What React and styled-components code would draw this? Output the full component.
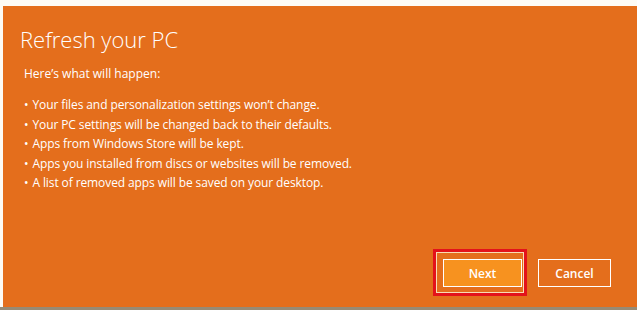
import React from "react";
import styled, { createGlobalStyle } from "styled-components";

const GlobalStyle = createGlobalStyle`
  html, body {
    margin: 0;
    padding: 0;
    background: #ffffff;
  }
  body {
    font-family: "Open Sans", "Noto Sans", sans-serif;
  }
`;

// Outer screen: thin white band on top, tan edge at the bottom
const Screen = styled.div`
  width: 637px;
  height: 310px;
  display: flex;
  flex-direction: column;
  background: #fdfbf5;
  padding: 6px 0 0 3px;
  box-sizing: border-box;
  overflow: hidden;
`;

const Panel = styled.div`
  flex: 1;
  display: flex;
  flex-direction: column;
  background: #e46e1c;
  color: #ffffff;
  padding: 0 0 0 17px;
`;

const BottomEdge = styled.div`
  height: 3px;
  margin-left: -3px;
  background: #978a74;
`;

const Title = styled.h1`
  margin: 18px 0 0 0;
  font-size: 22px;
  font-weight: 300;
  line-height: 30px;
`;

const Intro = styled.p`
  margin: 11px 0 0 4px;
  font-size: 12px;
  line-height: 18px;
`;

const List = styled.ul`
  list-style: none;
  margin: 12px 0 0 4px;
  padding: 0;
`;

const Item = styled.li`
  font-size: 12px;
  line-height: 19.5px;
  letter-spacing: -0.1px;

  &::before {
    content: "•";
    margin-right: 4px;
  }
`;

const Footer = styled.div`
  margin-top: auto;
  margin-bottom: 11px;
  display: flex;
  justify-content: flex-end;
  align-items: center;
  padding-right: 26px;
`;

// Red annotation frame around the Next button
const Highlight = styled.div`
  border: 3px solid #e3121b;
  margin-right: 11px;
`;

const FocusRing = styled.div`
  border: 1px solid #f8dcb4;
  padding: 6px 1px 5px 6px;
`;

const Button = styled.button`
  width: ${(p) => (p.$wide ? 79 : 73)}px;
  height: 28px;
  box-sizing: border-box;
  border: 1px solid #ffffff;
  background: ${(p) => (p.$primary ? "#f7921f" : "transparent")};
  color: #ffffff;
  font-family: "Open Sans", "Noto Sans", sans-serif;
  font-size: 12px;
  font-weight: 600;
  padding: 0;
  margin-top: ${(p) => (p.$primary ? 0 : 1)}px;
  cursor: pointer;
`;

const items = [
  "Your files and personalization settings won’t change.",
  "Your PC settings will be changed back to their defaults.",
  "Apps from Windows Store will be kept.",
  "Apps you installed from discs or websites will be removed.",
  "A list of removed apps will be saved on your desktop.",
];

export default function App() {
  return (
    <>
      <GlobalStyle />
      <Screen>
        <Panel>
          <Title>Refresh your PC</Title>
          <Intro>Here’s what will happen:</Intro>
          <List>
            {items.map((t) => (
              <Item key={t}>{t}</Item>
            ))}
          </List>
          <Footer>
            <Highlight>
              <FocusRing>
                <Button $primary $wide>Next</Button>
              </FocusRing>
            </Highlight>
            <Button>Cancel</Button>
          </Footer>
        </Panel>
        <BottomEdge />
      </Screen>
    </>
  );
}
